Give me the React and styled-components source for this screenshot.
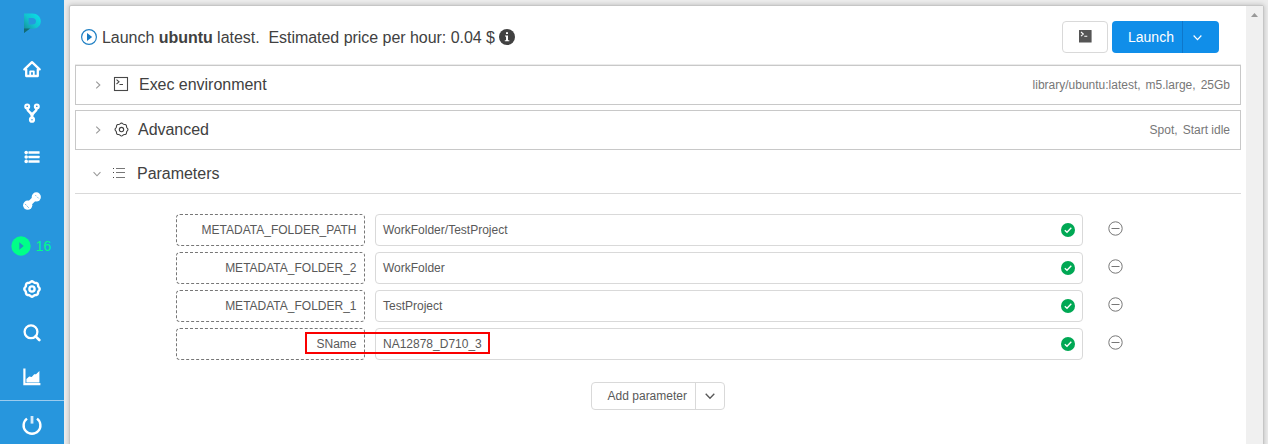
import React from "react";
import styled, { createGlobalStyle, css } from "styled-components";

const GlobalStyle = createGlobalStyle`
  *, *::before, *::after { box-sizing: border-box; }
  html, body, #root { height: 100%; margin: 0; }
  body {
    overflow: hidden;
    background: #ececec;
    color: #414141;
    font-family: "Liberation Sans", Arial, sans-serif;
    font-size: 12px;
  }
  button { font: inherit; margin: 0; padding: 0; }
  svg { display: block; flex: none; }
`;

const Layout = styled.div`
  display: flex;
  height: 444px;
  overflow: hidden;
`;

const Sidebar = styled.nav`
  display: flex;
  flex-direction: column;
  flex: none;
  width: 64px;
  background: #2796dd;
  color: #fff;
`;

const LogoSlot = styled.div`
  display: flex;
  align-items: center;
  justify-content: center;
  height: 47px;
  flex: none;
  padding-bottom: 1px;
`;

const NavItem = styled.a`
  display: flex;
  align-items: center;
  justify-content: center;
  gap: 5px;
  height: 44px;
  flex: none;
  font-size: 14px;
  ${(p) => p.$active && css`color: #0f8; padding-top: 2px; padding-right: 2px;`}
`;

const NavFooter = styled.div`
  margin-top: 1px;
  padding-top: 2px;
  border-top: 1px solid #9ccbee;
  flex: none;
`;

const Main = styled.main`
  flex: 1;
  min-width: 0;
  padding: 5px 4px 0 5px;
`;

const Card = styled.section`
  display: flex;
  height: 460px;
  border: 1px solid #c6c6c6;
  border-radius: 2px;
  background: #fff;
  box-shadow: 0 0 5px rgba(0, 0, 0, 0.22);
`;

const Content = styled.div`
  flex: 1;
  min-width: 0;
  padding: 0 5px;
`;

const Scrollbar = styled.div`
  display: flex;
  justify-content: center;
  width: 17px;
  flex: none;
  padding-top: 7px;
  background: #f0f0f0;
`;

const Header = styled.header`
  display: flex;
  align-items: center;
  height: 58px;
  padding: 4px 22px 0 6px;
`;

const Title = styled.h1`
  display: flex;
  align-items: center;
  flex: 1;
  margin: 0;
  font-size: 16px;
  font-weight: 400;
  line-height: 24px;
  white-space: pre;

  span {
    margin-left: 5px;
    margin-right: 4px;
    padding-top: 1px;
    line-height: 23px;
    letter-spacing: -0.035px;
  }
`;

const Actions = styled.div`
  display: flex;
  gap: 4px;
`;

const IconButton = styled.button`
  display: flex;
  align-items: center;
  justify-content: center;
  width: 46px;
  height: 32px;
  border: 1px solid #d9d9d9;
  border-radius: 4px;
  background: #fff;
  padding-bottom: 1px;
`;

const SplitButton = styled.div`
  display: flex;
  overflow: hidden;
  border-radius: 4px;
  ${(p) =>
    p.$primary
      ? css`height: 32px; background: #108ee9; color: #fff; font-size: 14px; --divider: #0e77ca;`
      : css`height: 28px; border: 1px solid #d9d9d9; background: #fff; color: #595959; --divider: #d9d9d9;`}
`;

const SplitMain = styled.button`
  width: ${(p) => p.$width}px;
  padding-left: ${(p) => p.$inset}px;
  border: 0;
  border-right: 1px solid var(--divider);
  background: none;
  color: inherit;
  text-align: left;
  white-space: nowrap;
`;

const SplitToggle = styled.button`
  display: flex;
  align-items: center;
  width: ${(p) => p.$width}px;
  padding-left: ${(p) => p.$inset}px;
  border: 0;
  background: none;
  color: inherit;
`;

const Panels = styled.div`
  display: flex;
  flex-direction: column;
  gap: 5px;
  border-top: 1px solid #ebebeb;
`;

const PanelHeader = styled.div`
  display: flex;
  align-items: center;
  height: 40px;
  padding: 0 10px 0 18px;
  border: 1px solid #c8c8c8;
  ${(p) => p.$open && css`
    height: 39px;
    padding-left: 18px;
    border-width: 0 0 1px;
    border-color: #d9d9d9;
  `}
`;

const PanelIcon = styled.div`
  display: flex;
  justify-content: center;
  width: 16px;
  margin-left: 11px;
  padding-bottom: 2px;
`;

const PanelTitle = styled.h2`
  flex: 1;
  margin: 0;
  padding-left: ${(p) => p.$inset}px;
  font-size: 16px;
  font-weight: 400;
  line-height: 20px;
  letter-spacing: -0.03px;
`;

const Summary = styled.div`
  display: flex;
  gap: 5px;
  color: #777;
`;

const Parameters = styled.div`
  display: flex;
  flex-direction: column;
  gap: 6px;
  padding: 20px 0 0 101px;
`;

const ParameterRow = styled.div`
  position: relative;
  display: flex;
  align-items: center;
`;

const ParameterName = styled.div`
  width: 189px;
  height: 32px;
  padding: 0 7.5px;
  border: 1px dashed #777;
  border-radius: 4px;
  color: #595959;
  line-height: 30px;
  text-align: right;
`;

const ParameterValue = styled.div`
  display: flex;
  align-items: center;
  justify-content: space-between;
  width: 708px;
  height: 32px;
  margin: 0 25px 0 10px;
  padding: 0 7.5px 0 7px;
  border: 1px solid #d9d9d9;
  border-radius: 4px;
  color: #595959;
`;

const RemoveButton = styled.button`
  display: flex;
  border: 0;
  margin-bottom: 3px;
  background: none;
  color: #777;
`;

const Highlight = styled.div`
  position: absolute;
  left: 129px;
  top: 4px;
  width: 185px;
  height: 22px;
  border: 2px solid #fa0000;
`;

const AddRow = styled.div`
  display: flex;
  justify-content: center;
  margin-top: 22px;
`;

const stroke = { fill: "none", stroke: "currentColor", strokeLinecap: "round", strokeLinejoin: "round" };

const Logo = () => (
  <svg width="20" height="22" viewBox="0 0 20 22">
    <defs>
      <linearGradient id="brand" x1="1" y1="0" x2="0" y2="1">
        <stop offset="0" stopColor="#06e4ec" />
        <stop offset="0.5" stopColor="#12c3cf" />
        <stop offset="1" stopColor="#15868f" />
      </linearGradient>
    </defs>
    <path fillRule="evenodd" fill="url(#brand)" d="M2 1.5H10.5C15 1.5 18.8 4.8 18.8 9.2C18.8 14 15 16.7 10.5 16.7H8L2 20.8ZM6.6 5.9V12.5H10.3C12.6 12.5 14 11.2 14 9.2C14 7.2 12.6 5.9 10.3 5.9Z" />
    <path fill="#146b75" d="M2 16.5H8L2 21Z" />
  </svg>
);

const HomeIcon = () => (
  <svg width="18" height="18" viewBox="0 0 18 18" {...stroke} strokeWidth="2.3">
    <path d="M1.4 9.4L9 2.1L16.6 9.4" />
    <path d="M3.2 9.4V16H14.8V9.4" />
    <path d="M7.2 15.5V11.3H10.8V15.5" strokeWidth="1.8" />
  </svg>
);

const ForkIcon = () => (
  <svg width="18" height="20" viewBox="0 0 18 20" {...stroke}>
    <circle cx="4.2" cy="3.4" r="1.9" strokeWidth="2.2" />
    <circle cx="13.8" cy="3.4" r="1.9" strokeWidth="2.2" />
    <circle cx="9" cy="16.7" r="1.9" strokeWidth="2.4" />
    <path d="M4.2 5.2Q4.4 8 6.8 9.3Q9 10.6 9 14.5M13.8 5.2Q13.6 8 11.2 9.3Q9 10.6 9 14.5" strokeWidth="2.5" />
  </svg>
);

const MenuListIcon = () => (
  <svg width="16" height="14" viewBox="0 0 16 14" fill="currentColor">
    {[2.6, 7, 11.4].map((y) => (
      <g key={y}>
        <circle cx="2.2" cy={y} r="1.8" />
        <rect x="4.4" y={y - 1.25} width="11.2" height="2.5" rx="0.5" />
      </g>
    ))}
  </svg>
);

const ToolsIcon = () => (
  <svg width="18" height="18" viewBox="0 0 18 18">
    <path d="M5 13L13 5" stroke="currentColor" strokeWidth="4.6" />
    <circle cx="4.7" cy="13.2" r="4.6" fill="currentColor" />
    <circle cx="13.3" cy="4.9" r="4.6" fill="currentColor" />
    <g stroke="#62b1e6" strokeWidth="0.9" strokeLinecap="round">
      <path d="M2.3 12.2L3.3 13.2M4.5 14.5L5.5 15.5M12.6 3.4L13.2 4M14.7 5.4L15.4 6.1" />
    </g>
  </svg>
);

const RunsIcon = () => (
  <svg width="20" height="20" viewBox="0 0 20 20">
    <circle cx="10" cy="10" r="9.7" fill="#0f8" />
    <path d="M8.3 6.3L12.7 10L8.3 13.7Z" fill="#2491c4" />
  </svg>
);

const gearPath = Array.from({ length: 49 }, (_, i) => {
  const a = (i / 48) * Math.PI * 2;
  const r = 7.25 + 0.5 * Math.cos(a * 8);
  return `${i ? "L" : "M"}${(9 + r * Math.cos(a)).toFixed(2)} ${(9 + r * Math.sin(a)).toFixed(2)}`;
}).join("") + "Z";

const GearIcon = ({ size, weight }) => (
  <svg width={size} height={size} viewBox="0 0 18 18" {...stroke} strokeWidth={weight}>
    <path d={gearPath} />
    <circle cx="9" cy="9" r="2.6" />
  </svg>
);

const SearchIcon = () => (
  <svg width="18" height="18" viewBox="0 0 18 18" {...stroke} strokeWidth="2.3">
    <circle cx="8" cy="7.8" r="6.4" />
    <path d="M12.6 12.4L16.3 16" strokeWidth="2.7" />
  </svg>
);

const ChartIcon = () => (
  <svg width="18" height="18" viewBox="0 0 18 18">
    <path d="M1.4 0.6V16.2H17.4" fill="none" stroke="currentColor" strokeWidth="2.2" />
    <path d="M3.4 14.4V11L6.2 8.6L8.7 9L11.2 6.2L13 6.2L16.4 3V14.4Z" fill="currentColor" />
  </svg>
);

const PowerIcon = () => (
  <svg width="20" height="20" viewBox="0 0 20 20" {...stroke} strokeWidth="2.4" strokeLinecap="butt">
    <path d="M5 3.6A8.4 8.4 0 1 0 15 3.6" />
    <path d="M10 1V8.6" strokeWidth="2.8" stroke="#d5eafa" />
  </svg>
);

const PlayIcon = () => (
  <svg width="16" height="16" viewBox="0 0 16 16">
    <circle cx="8" cy="8" r="7.4" fill="none" stroke="#2080c4" strokeWidth="1.2" />
    <path d="M6 3.9L11.2 8L6 12.1Z" fill="#1779c1" />
  </svg>
);

const InfoIcon = () => (
  <svg width="16" height="16" viewBox="0 0 16 16">
    <circle cx="8" cy="8" r="8" fill="#414141" />
    <path d="M7 3.2H9V5H7ZM6 6.4H9V11.2H10.3V12.2H5.8V11.2H7V7.4H6Z" fill="#fff" />
  </svg>
);

const TerminalIcon = ({ filled }) => (
  <svg width={filled ? 13 : 16} height={filled ? 13 : 16} viewBox={filled ? "1 1 13 13" : "0 0 16 16"}>
    {filled ? (
      <rect x="1" y="1" width="12.6" height="12.6" rx="0.3" fill="#555" />
    ) : (
      <rect x="1.5" y="1.5" width="13" height="13" fill="none" stroke="#484848" strokeWidth="1.1" />
    )}
    <path d={filled ? "M3 3L5.3 5.1L3 7.2M6.3 7.3H9.3" : "M3.5 3.6L6 5.8L3.5 8M6.5 8.5H10"} fill="none" stroke={filled ? "#fff" : "#484848"} strokeWidth="1.1" />
  </svg>
);

const ListIcon = () => (
  <svg width="14" height="10" viewBox="0 0 14 10" shapeRendering="crispEdges">
    {[0, 4, 9].map((y) => (
      <g key={y} fill="#777">
        <rect x="0" y={y} width="1" height="1" fill="#444" />
        <rect x="3" y={y} width="9" height="1" />
      </g>
    ))}
  </svg>
);

const Chevron = ({ right, size = 8, color = "currentColor" }) => (
  <svg width={size} height={size} viewBox="0 0 10 10" fill="none" stroke={color} strokeWidth="1.35">
    <path d={right ? "M2.8 0.8L7.3 5L2.8 9.2" : "M0.7 2.8L5 7.3L9.3 2.8"} />
  </svg>
);

const CheckIcon = () => (
  <svg width="14" height="14" viewBox="0 0 14 14">
    <circle cx="7" cy="7" r="7" fill="#00a854" />
    <path d="M3.8 7.2L6 9.3L10.3 4.7" fill="none" stroke="#fff" strokeWidth="1.3" />
  </svg>
);

const MinusIcon = () => (
  <svg width="15" height="15" viewBox="0 0 15 15" fill="none" stroke="currentColor">
    <circle cx="7.5" cy="7.5" r="6.7" />
    <path d="M3.5 7.5H11.5" />
  </svg>
);

const ScrollArrow = () => (
  <svg width="7" height="4" viewBox="0 0 7 4"><path d="M0 4L3.5 0L7 4Z" fill="#999" /></svg>
);

const parameters = [
  { name: "METADATA_FOLDER_PATH", value: "WorkFolder/TestProject" },
  { name: "METADATA_FOLDER_2", value: "WorkFolder" },
  { name: "METADATA_FOLDER_1", value: "TestProject" },
  { name: "SName", value: "NA12878_D710_3", highlighted: true },
];

const Panel = ({ title, icon, inset, summary = [], open }) => (
  <PanelHeader $open={open}>
    <Chevron right={!open} color="#999" />
    <PanelIcon>{icon}</PanelIcon>
    <PanelTitle $inset={inset}>{title}</PanelTitle>
    <Summary>
      {summary.map((text) => <span key={text}>{text}</span>)}
    </Summary>
  </PanelHeader>
);

export default function App() {
  return (
    <>
      <GlobalStyle />
      <Layout>
        <Sidebar>
          <LogoSlot><Logo /></LogoSlot>
          <NavItem><HomeIcon /></NavItem>
          <NavItem><ForkIcon /></NavItem>
          <NavItem><MenuListIcon /></NavItem>
          <NavItem><ToolsIcon /></NavItem>
          <NavItem $active><RunsIcon />16</NavItem>
          <NavItem><GearIcon size={18} weight={2.4} /></NavItem>
          <NavItem><SearchIcon /></NavItem>
          <NavItem><ChartIcon /></NavItem>
          <NavFooter><NavItem><PowerIcon /></NavItem></NavFooter>
        </Sidebar>
        <Main>
          <Card>
            <Content>
              <Header>
                <Title>
                  <PlayIcon />
                  <span>Launch <b>ubuntu</b> latest.{"  "}Estimated price per hour: 0.04 $</span>
                  <InfoIcon />
                </Title>
                <Actions>
                  <IconButton aria-label="Terminal"><TerminalIcon filled /></IconButton>
                  <SplitButton $primary>
                    <SplitMain $width={71} $inset={16}>Launch</SplitMain>
                    <SplitToggle $width={36} $inset={10} aria-label="More launch options"><Chevron size={9} /></SplitToggle>
                  </SplitButton>
                </Actions>
              </Header>
              <Panels>
                <Panel title="Exec environment" icon={<TerminalIcon />} inset={10} summary={["library/ubuntu:latest,", "m5.large,", "25Gb"]} />
                <Panel title="Advanced" icon={<GearIcon size={15} weight={1.3} />} inset={9} summary={["Spot,", "Start idle"]} />
                <Panel title="Parameters" icon={<ListIcon />} inset={9} open />
              </Panels>
              <Parameters>
                {parameters.map((item) => (
                  <ParameterRow key={item.name}>
                    <ParameterName>{item.name}</ParameterName>
                    <ParameterValue>{item.value}<CheckIcon /></ParameterValue>
                    <RemoveButton aria-label="Remove"><MinusIcon /></RemoveButton>
                    {item.highlighted && <Highlight />}
                  </ParameterRow>
                ))}
              </Parameters>
              <AddRow>
                <SplitButton>
                  <SplitMain $width={104} $inset={15.6}>Add parameter</SplitMain>
                  <SplitToggle $width={28} $inset={9} aria-label="More parameter types"><Chevron size={10} /></SplitToggle>
                </SplitButton>
              </AddRow>
            </Content>
            <Scrollbar><ScrollArrow /></Scrollbar>
          </Card>
        </Main>
      </Layout>
    </>
  );
}
